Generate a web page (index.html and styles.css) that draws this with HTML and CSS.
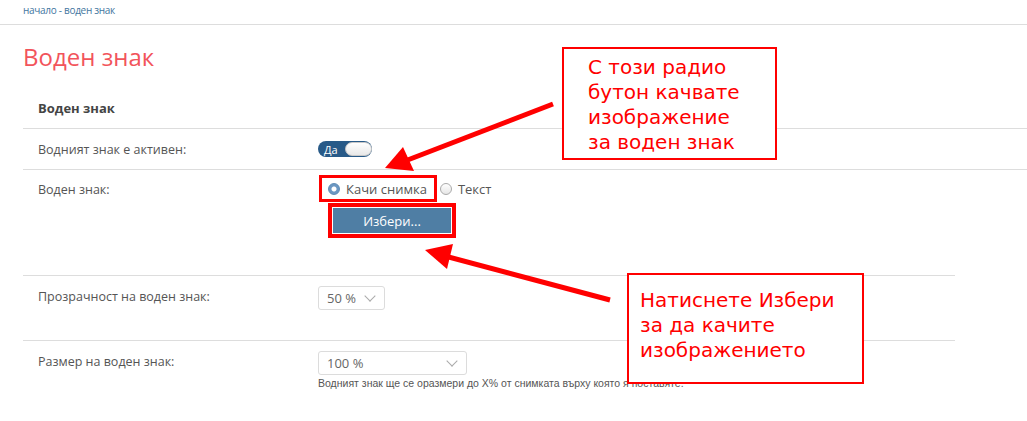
FILE: index.html
```html
<!DOCTYPE html>
<html>
<head>
    <title>Воден знак</title>
    <link rel="stylesheet" href="styles.css">
</head>
<body>
    <div class="breadcrumb"><a href="#">начало</a> - <a href="#">воден знак</a></div>

    <div class="content">
        <h1>Воден знак</h1>

        <div class="section">
            <div class="section-title">Воден знак</div>
            <div class="row row-switch">
                <div class="label">Водният знак е активен:</div>
                <div class="field">
                    <span class="toggle"><span class="toggle-on">Да</span><span class="toggle-knob"></span></span>
                </div>
            </div>
        </div>

        <div class="section section-narrow">
            <div class="row row-type">
                <div class="label">Воден знак:</div>
                <div class="field">
                    <div class="radios">
                        <label class="radio marked"><span class="dot checked"></span>Качи снимка</label>
                        <label class="radio"><span class="dot"></span>Текст</label>
                    </div>
                    <button type="button" class="btn-upload">Избери...</button>
                </div>
            </div>
            <div class="row row-select">
                <div class="label">Прозрачност на воден знак:</div>
                <div class="field">
                    <div class="select select-small">50 %<span class="chevron"></span></div>
                </div>
            </div>
            <div class="row row-last">
                <div class="label">Размер на воден знак:</div>
                <div class="field">
                    <div class="select select-wide">100 %<span class="chevron"></span></div>
                    <div class="help">Водният знак ще се оразмери до X% от снимката върху която я поставяте.</div>
                </div>
            </div>
        </div>
    </div>

    <!-- анотации -->
    <svg class="arrows" width="1027" height="421" viewBox="0 0 1027 421">
        <line x1="553" y1="104" x2="405" y2="161" stroke="#ff0000" stroke-width="5"/>
        <polygon points="385,168 403,147 414,171" fill="#ff0000"/>
        <line x1="610" y1="300" x2="445" y2="256" stroke="#ff0000" stroke-width="5"/>
        <polygon points="425,250 453,244 447,269" fill="#ff0000"/>
    </svg>
    <div class="note note-top">С този радио<br>бутон качвате<br>изображение<br>за воден знак</div>
    <div class="note note-bottom">Натиснете Избери<br>за да качите<br>изображението</div>
</body>
</html>
```

FILE: styles.css
```css
body {
    margin: 0;
    font-family: "Open Sans", sans-serif;
    color: #555;
    background-color: #fff;
    position: relative;
    height: 421px;
    overflow: hidden;
}
.breadcrumb {
    height: 24px;
    line-height: 21px;
    padding: 0 23px;
    font-size: 10px;
    letter-spacing: -0.3px;
    color: #3f76a0;
    border-bottom: 1px solid #dddddd;
}
.breadcrumb a {
    color: #3f76a0;
    text-decoration: none;
}
.content {
    padding-left: 23px;
}
h1 {
    margin: 15px 0 0 0;
    font-size: 24px;
    font-weight: normal;
    color: #f2545b;
    line-height: 34px;
}
.section-title {
    font-size: 13px;
    font-weight: bold;
    color: #444;
    margin-top: 11px;
    padding: 14px 15px 0 15px;
    height: 29px;
    border-bottom: 1px solid #dddddd;
}
.row {
    display: flex;
    border-bottom: 1px solid #dddddd;
}
.label {
    width: 280px;
    padding-left: 15px;
    font-size: 12.5px;
    flex-shrink: 0;
}
.row-switch {
    height: 40px;
    align-items: center;
}
.section-narrow {
    margin-right: 72px;
}
.row-type {
    height: 105px;
}
.row-type .label {
    padding-top: 11px;
}
.row-select {
    height: 64px;
}
.row-select .label,
.row-last .label {
    padding-top: 12px;
}
.row-select .field,
.row-last .field {
    padding-top: 10px;
}
.row-last {
    border-bottom: none;
}

/* превключвател */
.toggle {
    display: flex;
    align-items: center;
    width: 54px;
    height: 16px;
    border-radius: 8px;
    background-color: #285a88;
}
.toggle-on {
    color: #fff;
    font-size: 11px;
    padding-left: 6px;
    width: 21px;
}
.toggle-knob {
    width: 25px;
    height: 12px;
    border-radius: 7px;
    background: linear-gradient(#fff, #e8e8e8);
    border: 1px solid #c8c8c8;
}

/* радио бутони */
.radios {
    display: flex;
    align-items: center;
    margin-top: 8px;
}
.radio {
    display: flex;
    align-items: center;
    font-size: 13px;
    height: 21px;
    padding: 0 7px 0 6px;
}
.radio.marked {
    outline: 3px solid #ff0000;
    outline-offset: 0;
    margin-left: 4px;
}
.radios .radio + .radio {
    padding-left: 6px;
}
.dot {
    width: 10px;
    height: 10px;
    border-radius: 50%;
    border: 1px solid #aaa;
    background: linear-gradient(#fff, #e6e6e6);
    margin-right: 6px;
}
.dot.checked {
    border-color: #5c8bb5;
    background: radial-gradient(circle, #fff 0 2px, #6b97c2 3px);
}
.btn-upload {
    display: block;
    width: 118px;
    height: 25px;
    margin: 9px 0 0 15px;
    border: none;
    background-color: #4f7ea4;
    color: #fff;
    font-family: "Open Sans", sans-serif;
    font-size: 13px;
    outline: 4px solid #ff0000;
    outline-offset: 1px;
}

/* падащи менюта */
.select {
    position: relative;
    height: 22px;
    line-height: 23px;
    border: 1px solid #dcdcdc;
    border-radius: 3px;
    padding-left: 8px;
    font-size: 13px;
    color: #666;
}
.select-small {
    width: 57px;
}
.select-wide {
    width: 139px;
}
.chevron {
    position: absolute;
    right: 10px;
    top: 5px;
    width: 7px;
    height: 7px;
    border-right: 1px solid #aaa;
    border-bottom: 1px solid #aaa;
    transform: rotate(45deg);
}
.help {
    font-family: "Liberation Sans", Arial, sans-serif;
    font-size: 10.5px;
    margin-top: 2px;
    color: #555;
}

/* анотации */
.arrows {
    position: absolute;
    left: 0;
    top: 0;
}
.note {
    position: absolute;
    border: 2px solid #ff0000;
    background-color: #fff;
    color: #ff0000;
    font-family: "DejaVu Sans", sans-serif;
    font-size: 20px;
    line-height: 25px;
}
.note-top {
    left: 562px;
    top: 47px;
    width: 187px;
    height: 99px;
    padding: 6px 0 4px 24px;
}
.note-bottom {
    left: 627px;
    top: 273px;
    width: 222px;
    height: 94px;
    padding: 13px 0 0 11px;
}
```
